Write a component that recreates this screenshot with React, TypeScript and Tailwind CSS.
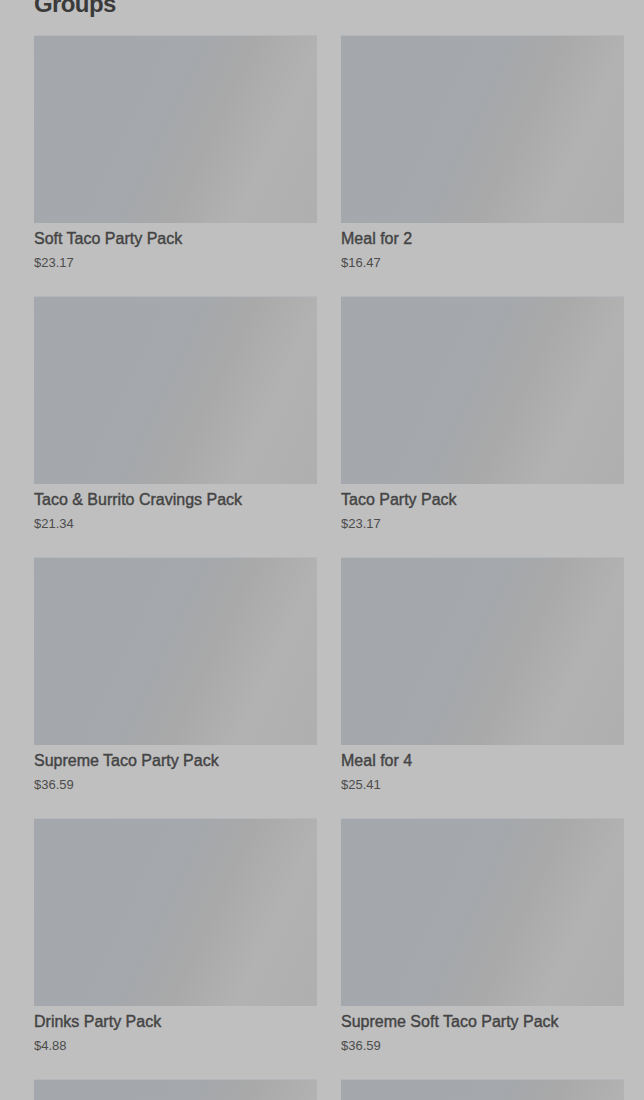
const items = [
  { name: 'Soft Taco Party Pack', price: '$23.17' },
  { name: 'Meal for 2', price: '$16.47' },
  { name: 'Taco & Burrito Cravings Pack', price: '$21.34' },
  { name: 'Taco Party Pack', price: '$23.17' },
  { name: 'Supreme Taco Party Pack', price: '$36.59' },
  { name: 'Meal for 4', price: '$25.41' },
  { name: 'Drinks Party Pack', price: '$4.88' },
  { name: 'Supreme Soft Taco Party Pack', price: '$36.59' },
]

function ItemCard({ name, price }: { name: string; price: string }) {
  return (
    <div className="flex flex-col">
      <div className="h-[188px] w-full border-t border-[#b4b7bb] bg-[linear-gradient(115deg,#a4a7ab_0%,#a5a8ac_45%,#a9a9a9_60%,#b2b2b2_78%,#afafaf_100%)]" />
      <div className="mt-1 text-[16px] leading-6 text-[#444] [-webkit-text-stroke:0.4px_#444]">{name}</div>
      <div className="mt-0.5 text-[13px] leading-5 text-[#4c4c4c]">{price}</div>
    </div>
  )
}

export default function App() {
  return (
    <div className="h-[1100px] overflow-hidden bg-[#bfbfbf] font-['Liberation_Sans',Arial,sans-serif]">
      <div className="pl-[34px] pr-[20px]">
        {/* Section heading, scrolled partly out of view */}
        <h2 className="-mt-[14px] h-[49px] text-[24px] leading-[36px] font-bold tracking-tight text-[#3a3a3a]">
          Groups
        </h2>

        <div className="grid grid-cols-2 gap-x-6 gap-y-[23px]">
          {items.map((item) => (
            <ItemCard key={item.name} name={item.name} price={item.price} />
          ))}
          {/* next row, only image tops visible */}
          <div className="h-[188px] border-t border-[#b4b7bb] bg-[linear-gradient(115deg,#a4a7ab_0%,#a5a8ac_45%,#a9a9a9_60%,#b2b2b2_78%,#afafaf_100%)]" />
          <div className="h-[188px] border-t border-[#b4b7bb] bg-[linear-gradient(115deg,#a4a7ab_0%,#a5a8ac_45%,#a9a9a9_60%,#b2b2b2_78%,#afafaf_100%)]" />
        </div>
      </div>
    </div>
  )
}
